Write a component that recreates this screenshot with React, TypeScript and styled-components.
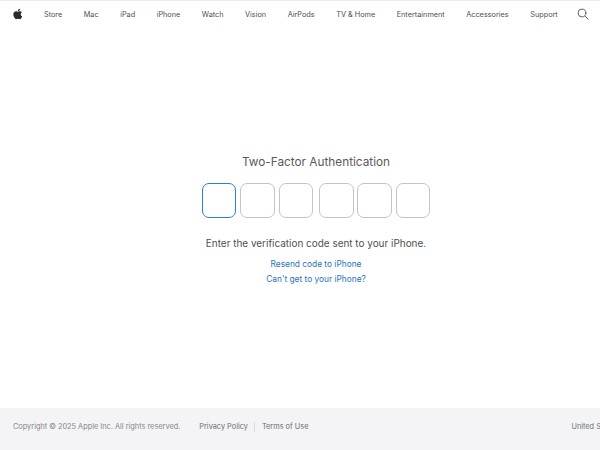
import React from "react";
import styled, { createGlobalStyle } from "styled-components";
import { FaApple } from "react-icons/fa";

const Global = createGlobalStyle`
  html, body { margin: 0; padding: 0; height: 100%; overflow: hidden; background: #fff; }
  #root { height: 100%; }
  * { box-sizing: border-box; }
`;
const Page = styled.div`
  height: 450px; width: 600px; display: flex; flex-direction: column; overflow: hidden;
  font-family: Inter, "Liberation Sans", sans-serif; color: #1d1d1f;
`;
const Nav = styled.nav`
  height: 28px; flex: none; display: flex; align-items: center; gap: 21.5px; padding: 0 0 0 13px;
  border-top: 1px solid #ececec; font-size: 7.3px; white-space: nowrap;
`;
const NavLink = styled.a`color: #505050; line-height: 10px;`;
const Logo = styled(FaApple)`width: 9.5px; height: 12px; color: #2b2b2b; flex: none; margin-top: -2px;`;
const SearchIcon = styled.svg`width: 12px; height: 12px; flex: none; margin-left: -2px; margin-top: -1px;`;
const Main = styled.main`
  flex: 1; display: flex; flex-direction: column; align-items: center; padding-top: 126px;
`;
const Title = styled.h1`
  margin: 0 0 0 32px; font-size: 11.8px; font-weight: 400; line-height: 17px; color: #5a5a5a;
  white-space: nowrap;
`;
const Codes = styled.div`display: flex; margin: 12px 0 0 32px;`;
const Group = styled.div`display: flex; gap: 3.8px; & + & { margin-left: 6px; }`;
const Digit = styled.div<{ $active?: boolean }>`
  width: 34.5px; height: 35px; border-radius: 7px;
  border: ${p => (p.$active ? "1.4px solid #2a7fd0" : "1px solid #c4c4c4")};
`;
const Hint = styled.p`
  margin: 18px 0 0 32px; font-size: 9.95px; line-height: 14px; color: #505050; white-space: nowrap;
`;
const Links = styled.div`
  margin: 7.5px 0 0 32px; display: flex; flex-direction: column; align-items: center; gap: 2px;
`;
const BlueLink = styled.a`font-size: 8.35px; line-height: 13px; color: #2a72c0; white-space: nowrap;`;
const Footer = styled.footer`
  height: 42px; flex: none; background: #f4f4f7; display: flex; align-items: center;
  padding: 0 0 4px 13px; font-size: 7.35px; line-height: 10px; white-space: nowrap; overflow: hidden;
`;
const Copy = styled.span`color: #85858a; flex: none;`;
const FootLinks = styled.div`display: flex; align-items: center; margin-left: 19px; flex: none;`;
const FootLink = styled.a<{ $divided?: boolean }>`
  color: #6a6a6f;
  ${p => (p.$divided ? "margin-left: 6px; padding-left: 7px; border-left: 1px solid #dcdcdf;" : "")}
`;
const Locale = styled.span`margin-left: 263px; color: #707075; flex: none;`;

const items = ["Store", "Mac", "iPad", "iPhone", "Watch", "Vision", "AirPods", "TV & Home", "Entertainment", "Accessories", "Support"];

export default function App() {
  return (
    <Page>
      <Global />
      <Nav>
        <Logo />
        {items.map(i => <NavLink key={i}>{i}</NavLink>)}
        <SearchIcon viewBox="0 0 12 12" fill="none" stroke="#666" strokeWidth="1" strokeLinecap="round">
          <circle cx="5" cy="5" r="3.9" />
          <path d="M8 8l3.3 3.3" />
        </SearchIcon>
      </Nav>
      <Main>
        <Title>Two-Factor Authentication</Title>
        <Codes>
          <Group><Digit $active /><Digit /><Digit /></Group>
          <Group><Digit /><Digit /><Digit /></Group>
        </Codes>
        <Hint>Enter the verification code sent to your iPhone.</Hint>
        <Links>
          <BlueLink>Resend code to iPhone</BlueLink>
          <BlueLink>Can't get to your iPhone?</BlueLink>
        </Links>
      </Main>
      <Footer>
        <Copy>Copyright © 2025 Apple Inc. All rights reserved.</Copy>
        <FootLinks>
          <FootLink>Privacy Policy</FootLink>
          <FootLink $divided>Terms of Use</FootLink>
        </FootLinks>
        <Locale>United States</Locale>
      </Footer>
    </Page>
  );
}
